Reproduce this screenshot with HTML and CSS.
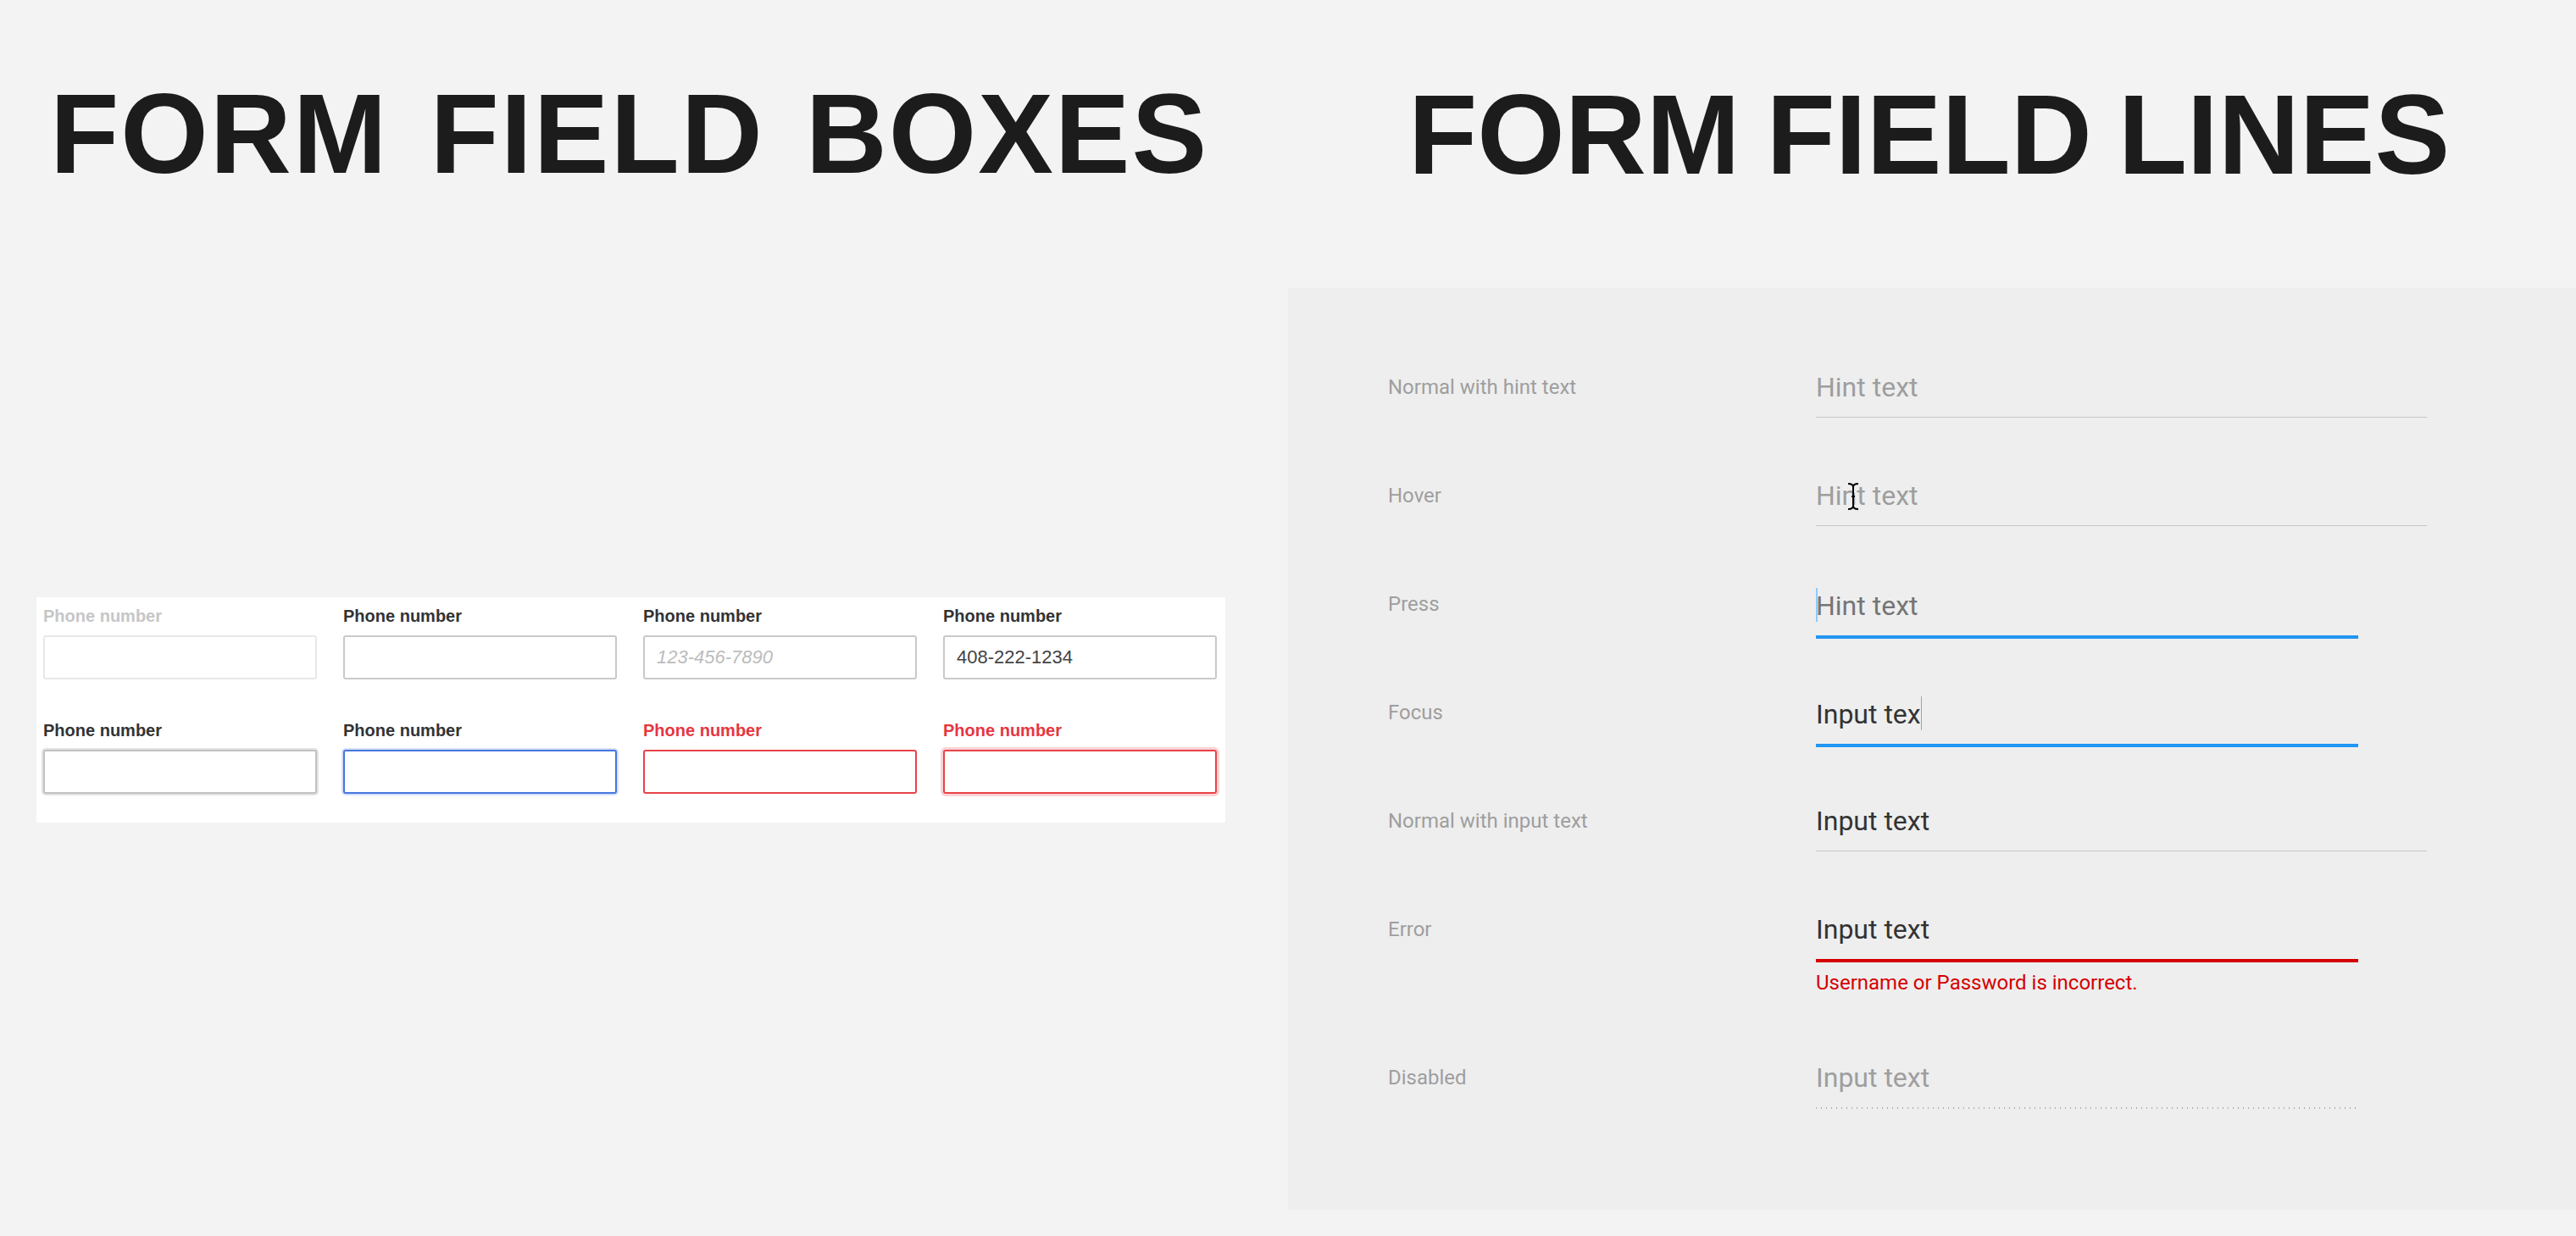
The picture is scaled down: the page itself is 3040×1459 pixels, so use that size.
FILE: index.html
```html
<!DOCTYPE html>
<html lang="en">
<head>
    <meta charset="UTF-8">
    <meta name="viewport" content="width=device-width, initial-scale=1.0">
    <title>Form Field Boxes and Lines</title>
    <link rel="stylesheet" href="styles.css">
</head>
<body>
    <div class="page">
        <div class="col-left">
            <h1 class="title title-boxes">FORM FIELD BOXES</h1>

            <div class="boxes">
                <div class="box-field">
                    <div class="box-label disabled">Phone number</div>
                    <div class="box box-disabled"></div>
                </div>
                <div class="box-field">
                    <div class="box-label">Phone number</div>
                    <div class="box"></div>
                </div>
                <div class="box-field">
                    <div class="box-label">Phone number</div>
                    <div class="box"><span class="placeholder">123-456-7890</span></div>
                </div>
                <div class="box-field">
                    <div class="box-label">Phone number</div>
                    <div class="box"><span class="value">408-222-1234</span></div>
                </div>

                <div class="box-field">
                    <div class="box-label">Phone number</div>
                    <div class="box box-press"></div>
                </div>
                <div class="box-field">
                    <div class="box-label">Phone number</div>
                    <div class="box box-focus"></div>
                </div>
                <div class="box-field">
                    <div class="box-label error">Phone number</div>
                    <div class="box box-error"></div>
                </div>
                <div class="box-field">
                    <div class="box-label error">Phone number</div>
                    <div class="box box-error box-error-focus"></div>
                </div>
            </div>
        </div>

        <div class="col-right">
            <h1 class="title title-lines">FORM FIELD LINES</h1>

            <div class="lines">
                <div class="line-row">
                    <div class="state-label">Normal with hint text</div>
                    <div class="line-field">
                        <div class="field-text hint">Hint text</div>
                        <div class="underline"></div>
                    </div>
                </div>

                <div class="line-row">
                    <div class="state-label">Hover</div>
                    <div class="line-field">
                        <div class="field-text hint">Hint text</div>
                        <div class="underline"></div>
                        <svg class="ibeam" width="14" height="32" viewBox="0 0 14 32">
                            <path d="M1 1 Q7 1 7 5 Q7 1 13 1 M7 5 L7 27 M1 31 Q7 31 7 27 Q7 31 13 31 M5 16 L9 16" fill="none" stroke="#000" stroke-width="2"/>
                        </svg>
                    </div>
                </div>

                <div class="line-row">
                    <div class="state-label">Press</div>
                    <div class="line-field">
                        <div class="field-text hint-dark"><span class="caret caret-start"></span>Hint text</div>
                        <div class="underline underline-blue"></div>
                    </div>
                </div>

                <div class="line-row">
                    <div class="state-label">Focus</div>
                    <div class="line-field">
                        <div class="field-text">Input tex<span class="caret"></span></div>
                        <div class="underline underline-blue"></div>
                    </div>
                </div>

                <div class="line-row">
                    <div class="state-label">Normal with input text</div>
                    <div class="line-field">
                        <div class="field-text">Input text</div>
                        <div class="underline"></div>
                    </div>
                </div>

                <div class="line-row line-row-error">
                    <div class="state-label">Error</div>
                    <div class="line-field">
                        <div class="field-text">Input text</div>
                        <div class="underline underline-red"></div>
                        <div class="error-msg">Username or Password is incorrect.</div>
                    </div>
                </div>

                <div class="line-row">
                    <div class="state-label">Disabled</div>
                    <div class="line-field">
                        <div class="field-text hint">Input text</div>
                        <div class="underline underline-dotted"></div>
                    </div>
                </div>
            </div>
        </div>
    </div>
</body>
</html>
```

FILE: styles.css
```css
body {
    margin: 0;
    background-color: #f3f3f3;
    font-family: "Liberation Sans", Arial, sans-serif;
}
.page {
    display: flex;
    width: 3040px;
    height: 1459px;
}
.col-left {
    width: 1520px;
    flex-shrink: 0;
}
.col-right {
    flex: 1;
}
.title {
    margin: 92px 0 0 0;
    font-family: "Liberation Sans", Arial, sans-serif;
    font-weight: bold;
    font-size: 133px;
    line-height: 133px;
    color: #1c1c1c;
    white-space: nowrap;
}
.title-boxes {
    padding-left: 59px;
    letter-spacing: 2px;
    word-spacing: 10px;
}
.title-lines {
    margin-top: 93px;
    padding-left: 142px;
    letter-spacing: 0;
    word-spacing: -6px;
}

/* boxes */
.boxes {
    box-sizing: border-box;
    width: 1403px;
    height: 266px;
    margin: 480px 0 0 43px;
    padding: 10px 8px 34px;
    background: #fff;
    display: grid;
    grid-template-columns: repeat(4, 323px);
    column-gap: 31px;
    row-gap: 48px;
}
.box-label {
    font-size: 20px;
    font-weight: bold;
    line-height: 24px;
    color: #333;
    margin-bottom: 11px;
}
.box-label.disabled { color: #c6c6c6; }
.box-label.error { color: #e5373f; }
.box {
    box-sizing: border-box;
    height: 52px;
    border: 2px solid #c9c9c9;
    border-radius: 3px;
    background: #fff;
    display: flex;
    align-items: center;
    padding: 0 14px;
    font-size: 22px;
}
.box-disabled { border-color: #e8e8e8; }
.box-press {
    border-color: #c2c2c2;
    box-shadow: 0 0 0 2px #e3e3e3;
}
.box-focus {
    border-color: #4676e0;
    box-shadow: 0 0 0 2px #d6e1f8;
}
.box-error { border-color: #e8434a; }
.box-error-focus { box-shadow: 0 0 0 3px #fad3d5; }
.placeholder {
    font-style: italic;
    color: #bcbcbc;
}
.value { color: #444; }

/* lines */
.lines {
    margin-top: 114px;
    padding: 98px 0 47px 118px;
    background: #eeeeee;
    font-family: Roboto, "Liberation Sans", sans-serif;
}
.line-row {
    display: grid;
    grid-template-columns: 505px 1fr;
    height: 128px;
}
.line-row-error { height: 175px; }
.state-label {
    font-size: 24px;
    line-height: 38px;
    color: #9e9e9e;
}
.line-field {
    position: relative;
    width: 721px;
}
.field-text {
    font-size: 32px;
    line-height: 38px;
    color: #333;
    white-space: nowrap;
}
.field-text.hint { color: #9e9e9e; }
.field-text.hint-dark { color: #757575; }
.caret {
    display: inline-block;
    width: 1px;
    height: 40px;
    background: #64b5f6;
    vertical-align: -8px;
}
.caret-start {
    width: 2px;
    margin-right: -2px;
    background: #90caf9;
}
.underline {
    margin-top: 16px;
    height: 1px;
    background: #c6c6c6;
}
.underline-blue {
    width: 640px;
    height: 4px;
    background: #2196f3;
}
.underline-red {
    width: 640px;
    height: 4px;
    background: #d50000;
}
.underline-dotted {
    width: 640px;
    height: 2px;
    background: linear-gradient(to right, #aaaaaa 1px, transparent 1px);
    background-size: 6px 2px;
}
.error-msg {
    margin-top: 10px;
    font-size: 24px;
    line-height: 28px;
    color: #d50000;
}
.ibeam {
    position: absolute;
    left: 37px;
    top: 4px;
}
```
